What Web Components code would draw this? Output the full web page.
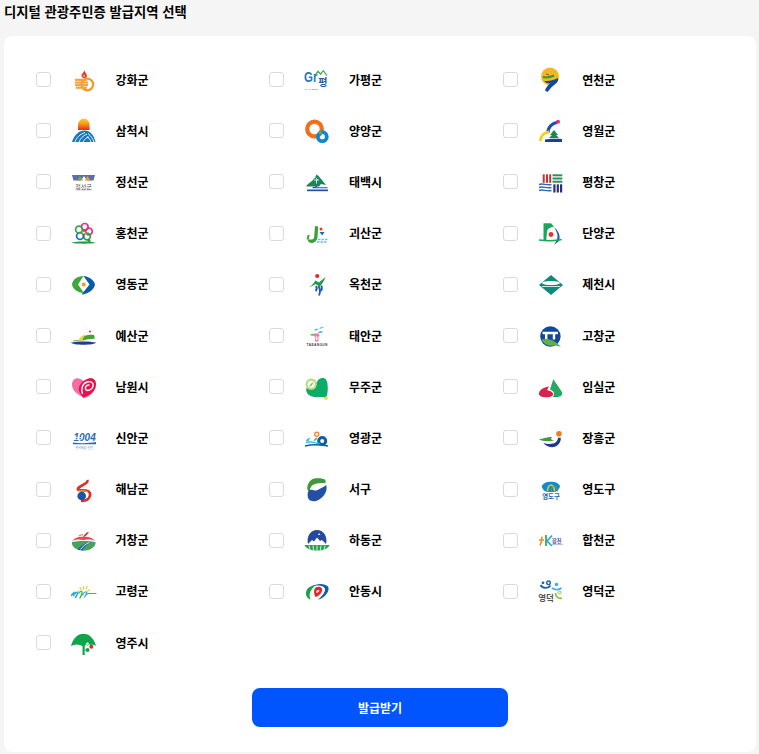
<!DOCTYPE html>
<html lang="ko"><head><meta charset="utf-8"><title>발급지역 선택</title>
<style>html,body{margin:0;padding:0;background:#f5f5f5}body{font-family:"Noto Sans CJK KR","Noto Sans",sans-serif}</style>
</head><body>
<region-page title="디지털 관광주민증 발급지역 선택" action="발급받기"></region-page>
<script>
const K='font-family="Noto Sans CJK KR,sans-serif"';
const LOGOS={
강화군:`<path d="M14.3 4c.6 2.5 3 3.8 2.6 6.5-.3 2-5 2.3-5.4-.3-.3-2 2.500-3.500 2.800-6.200z" fill="#e5382c"/><path d="M14 8.200c.9 1 1.500 1.900.9 2.900h-2.200c-.4-1 .9-1.700 1.300-2.900z" fill="#f6b23c"/><circle cx="17.300" cy="18.500" r="5.800" fill="none" stroke="#f39a2a" stroke-width="2.200"/><g fill="#f4a23e"><rect x="5" y="12.800" width="12" height="2.100"/><rect x="5" y="15.500" width="13" height="2.100"/><rect x="5" y="18.100" width="13" height="2.100"/><rect x="6" y="20.700" width="11" height="2.100"/></g>`,
삼척시:`<defs><linearGradient id="g" x1="0" y1="0" x2="0" y2="1"><stop offset="0" stop-color="#ffd21c"/><stop offset=".5" stop-color="#f7931e"/><stop offset="1" stop-color="#e5261f"/></linearGradient></defs><path d="M8.500 9.500a5.800 6.500 0 0 1 11.600 0v5H8.500z" fill="url(#g)" transform="translate(-.5 -1.500)"/><path d="M2 25C4 18 9 13.500 14.500 13.500 20 13.500 24 18 25.500 25z" fill="#1679bf"/><g fill="none" stroke="#fff" stroke-width=".9"><path d="M5 25c1-4 5-8 10-9.500M9 25c1-3 4-6.500 8-8M13 25c1-2 3-4.500 6-5"/><path d="M24 25c-1-3-3-6-6-8.500M21 25c-.5-2-2-4-4-5.500"/></g>`,
정선군:`<path d="M2 7h23l-1.500 5.500H3.500z" fill="#5c6eb0"/><path d="M10.500 13l3.500-5 3.500 5z" fill="#fff"/><path d="M7 12.500l3-4.500 3 4.500z" fill="#78ac3c"/><path d="M14.500 12.500l3-4.500 3 4.500z" fill="#f0993a"/><rect x="5" y="20.500" width="17" height="2.500" fill="#e6e6e6"/><text x="13.500" y="20.800" font-size="6" text-anchor="middle" fill="#555" ${K}>정선군</text>`,
홍천군:`<g fill="none" stroke-width="1.700"><circle cx="14.800" cy="7.800" r="3.300" stroke="#e8308a"/><circle cx="19" cy="12.500" r="3.300" stroke="#e8308a"/><circle cx="17" cy="17.500" r="3.300" stroke="#2fa84a"/><circle cx="10" cy="17" r="3.400" stroke="#1b6fc0"/><circle cx="9" cy="10.500" r="3.400" stroke="#2fa84a"/></g><rect x="13.200" y="10" width="1.500" height="3" fill="#e5382c"/><circle cx="12.500" cy="14" r=".9" fill="#f39322"/><circle cx="15.500" cy="14.500" r=".9" fill="#f39322"/><path d="M1 23.800C8 22 20 22 26 23.800 20 25 8 25 1 23.800z" fill="#1d9a3c"/><circle cx="19" cy="21.500" r="1.500" fill="#2a9a3c"/>`,
영동군:`<path d="M13.500 6C7 6 2.500 10 2 14.500 3 20 9 23 14 23l-6-8.500z" fill="#3aa83c"/><path d="M13.500 6C19 6.500 24 10 25 14.500 24 20 18 24 11.500 24.500l8-10z" fill="#0b5aa8"/><circle cx="13.700" cy="14.500" r="2" fill="#f39a2a"/>`,
예산군:`<path d="M9 18.500c2-4 8-6.500 15-5.500l1 3.500c-5 .5-9 1-11.500 2z" fill="#3fa535"/><path d="M8 18.500c1.500-3 4-5 8.500-6.500-2 1.500-3.500 4.500-4 6.500z" fill="#f2d32a"/><circle cx="20" cy="9.500" r="1.100" fill="#e5382c"/><path d="M1 20.500c6-1.500 19-1.500 25 0-1 3-24 3-25 0z" fill="#1e3c98"/><path d="M3 19c2-.3 4-.5 5.500-.5" stroke="#3fa535" stroke-width=".8"/>`,
남원시:`<path d="M14.500 25C8 22 2 18 2 11.500 2 7 5.500 4.500 9 5.500 12 6.200 13.500 8 14.500 9.500 16 7 19 4.800 22 5.500 25.500 6.500 26.500 10.500 25.500 14.500 24 20 19.500 23.500 14.500 25z" fill="#f26ea3"/><path d="M13.500 24.700C10 21 7 17 10 12 13 7 19 4.500 22.500 5.500 26.500 7 26.500 12 25 15.500 23 20 18 23 13.500 24.700z" fill="#e2134f"/><path d="M12.500 21C10.500 16 12.500 10.500 17 9 21 7.800 24 10 23 13.500 22 17 17 19 15.500 16.200 14.800 14 17 11.500 19.500 12" fill="none" stroke="#fff" stroke-width="1.400"/>`,
신안군:`<text x="3.500" y="17.500" font-size="10" font-weight="700" font-style="italic" fill="#2a6cb0" font-family="Liberation Sans,sans-serif" transform="translate(0 -3.200) scale(1 1.180)">1004</text><path d="M3 18.500c7 1 16 .8 23-.5v2.200H3z" fill="#2a6cb0"/><path d="M3 13.500h8M3 15.500h8" stroke="#fff" stroke-width=".7"/><text x="14" y="24.700" font-size="3" text-anchor="middle" fill="#5b8fc4" ${K}>천사의섬 신안</text>`,
해남군:`<path d="M17.300 5C19 9 10 10 8 13.500 7 16 12 15 16 15.500 20 16 21 19 19.500 22 18 25 14 26 11 25.700" fill="none" stroke="#d8322a" stroke-width="2.700"/><path d="M8 16c3-1 7-.5 10 1" fill="none" stroke="#f0a030" stroke-width="1"/><circle cx="11.700" cy="21" r="4.300" fill="#1d55a5"/>`,
거창군:`<path d="M2.500 15C5 11 10 10.500 13.500 11 17 10.500 22 11 25 15 20 13 17 13.500 13.500 14 10 13.500 7 13 2.500 15z" fill="#e84a4a"/><path d="M13 11c1-3 4-5 6-5.300-1 2.300-3 4.300-5 5.300z" fill="#d93a36"/><path d="M9 10c1.500-1 3-1.500 4-1" stroke="#e84a4a" stroke-width="1" fill="none"/><path d="M2 16C8 14.500 19 14.500 25.500 16V18C24 22 19 24.700 13.500 24.700S3 22 2 18z" fill="#46a35a"/><path d="M7.500 23.500C10 20 15 17 22 15.800 17 18.500 14 21 12.500 24.500z" fill="#2b62ae"/><path d="M10.500 23.500c2-3 5-5.500 9-7" stroke="#fff" stroke-width=".8" fill="none"/>`,
고령군:`<g fill="none" stroke-linecap="round"><path d="M1.500 18.500c1-2 2-2 2.500-3s-1.500 3 0 3M5 17c.5-1.500 2-2 2.500-1.500s-1 3.500-2 5" stroke="#2fa8dc" stroke-width="1.500"/><path d="M9 16c1-2 2.500-2 3-1s-1 4-2 6" stroke="#4db848" stroke-width="1.500"/><path d="M12.500 18c1-2 3-3.500 4-3s-1 3.500-2 5" stroke="#35aee0" stroke-width="1.300"/><path d="M16.500 17.500l1.500-1h8" stroke="#6a9a70" stroke-width="1.100" stroke-dasharray="1.500 .6"/><path d="M13.500 12l0-2.500M11 12.500l-1-2M16 11.500l1-2M17.500 14l2-1M9.500 14.500l-1.500-.5" stroke="#f5c842" stroke-width="1.300"/></g>`,
영주시:`<path d="M1 17C3 9 8 4.700 13.500 4.700S24 9 26 17C24 15.500 22 15.500 20 16L17 13.500 14.700 17V26H12.500V17C9 15 5 15 1 17z" fill="#0ea54a"/><circle cx="21.300" cy="17.700" r="2" fill="#e62a2a"/><circle cx="17.500" cy="14.800" r="1.600" fill="#fff" stroke="#0ea54a" stroke-width=".5"/><circle cx="17.600" cy="21" r="1.900" fill="#0ea54a"/><path d="M14.500 21h2" stroke="#0ea54a" stroke-width="1"/>`,
가평군:`<path d="M12 9l3-3.800 2.500 3 2.800-3.500 3.700 5" fill="none" stroke="#47a84a" stroke-width="1.200"/><text x="1" y="15" font-size="11.500" font-weight="700" fill="#2a78bd" font-family="Liberation Sans,sans-serif" transform="translate(0 -1.500) scale(1 1.200)">Gr</text><text x="15.200" y="20" font-size="10" font-weight="700" fill="#1f5ea8" ${K}>평</text><text x="2" y="23.700" font-size="2.400" fill="#666" font-family="Liberation Sans,sans-serif">GAPYEONG</text>`,
양양군:`<circle cx="11.500" cy="12" r="7.300" fill="none" stroke="#f0701a" stroke-width="4.200"/><circle cx="19.300" cy="19.700" r="4.500" fill="none" stroke="#0e86d4" stroke-width="3.800"/><path d="M14.500 16.500l3.500-3 1 3.500z" fill="#6eb43a"/>`,
태백시:`<path d="M13.500 6.500C16 8 19 12 23 17L18 16 16 18.500H3C5 15.500 7 14.500 9 13 11 11 12.500 9 13.500 6.500z" fill="#17875a"/><path d="M11 12h5M12.500 9.500l2 2M13.500 12v3.500" stroke="#fff" stroke-width=".9" fill="none"/><path d="M14 18c-.5 .8-2 1.500-4.500 1.800h15" fill="none" stroke="#20509e" stroke-width="1.100"/><rect x="4" y="21.500" width="21" height="1.700" fill="#20509e"/>`,
괴산군:`<path d="M8 20.500c2.500.3 3-1 3.200-3L12 7l3.200.5-.7 11c-.4 3-3 5.500-5.500 5.500-2 0-4-1-4.500-3.500z" fill="#3aa03a"/><path d="M4.500 20.500c.5-1.500 1-3 1-4.500" stroke="#3aa03a" stroke-width="2"/><circle cx="18" cy="10" r="1.500" fill="#e5382c"/><path d="M16.500 13h5l-2.300 3.500z" fill="#1e5fb4"/><path d="M15 20.500h10M14 23h10" stroke="#6cc0ea" stroke-width="1.300" stroke-dasharray="2.500 1"/>`,
옥천군:`<circle cx="14.200" cy="6" r="2.100" fill="#e5282a"/><path d="M4.500 17.500c3-.5 6-3.500 7.800-7L16 12.500l6.500-5.500C21 11 19 14.500 16.500 16.500l-4-2.500C10 16 7.500 17 4.500 17.500z" fill="#1c9a4a"/><path d="M13 16c1.200 1.800 1 3.500-.5 5M15.500 16c1.700 3 2 6 .5 9.500M18.300 15.500c1 2 .8 4 0 5.500" fill="none" stroke="#1f5eb0" stroke-width="1.900"/>`,
태안군:`<path d="M11 11.500h5l.5 2.500-1 .5v5h-3.500v-5l-1.300-.5z" fill="#ef7ab0"/><rect x="12.800" y="14.500" width="1.600" height="3.500" fill="#fff"/><path d="M7 13c1.500-1.500 3.500-1.500 5-.5-1.500 1.500-3.500 1.500-5 .5z" fill="#6cb84a"/><path d="M11 8c1-1 3-1.500 4.500-1-1 1.500-3 2-4.500 1zM16 6.500c1-1 3-2 5-2-1 1.500-3 2.500-5 2zM15 10.500c1-1.500 3-2 5-1-1 1.500-3 2-5 1z" fill="#4fbcdc"/><text x="14" y="23.500" font-size="3.300" fill="#444" text-anchor="middle" font-family="Liberation Sans,sans-serif" font-weight="700" textLength="21">TAEANGUN</text>`,
무주군:`<path d="M14 9C15 6 18 4.700 20 5 24 5.500 24.800 10 24.800 15 24.800 19 24 23 23 25 20 23 14 25.300 9 23.500 4 22 2.500 18 3.500 15L12 12z" fill="#0eaa68"/><circle cx="8.200" cy="11.300" r="5.700" fill="#b7dc7c"/><circle cx="8.200" cy="11.300" r="3.500" fill="#fff"/><path d="M6.200 14c.5-2 2-4 4-5-.3 2-1.500 4-4 5z" fill="#7dbb42"/><circle cx="23" cy="25.300" r="1.800" fill="#e8df45"/>`,
영광군:`<circle cx="19.200" cy="17" r="3.500" fill="none" stroke="#0d5ea8" stroke-width="3"/><path d="M3 18.500c3-1 5-1 8 0s4 1 6 1" fill="none" stroke="#1db4d4" stroke-width="1.300"/><path d="M2 22c6-1.500 15-1.500 23 0" fill="none" stroke="#0d5ea8" stroke-width="1.500"/><circle cx="13.800" cy="10.300" r="2" fill="none" stroke="#f08a3a" stroke-width="1.400"/><path d="M10.500 17c.5-2 1.500-3 3.500-3.500.5 1.500-1 3.500-3.500 3.500z" fill="#5fba48"/><path d="M4 15.500l3-1M3 17l3-1" stroke="#1db4d4" stroke-width="1.100"/>`,
서구:`<path d="M4.200 13.300C4.500 8 8 3.300 13.200 3.300 17 3 21 3.500 22.500 5L22.500 8.300C18 7.500 13 8 9.800 10 7.500 11.500 7 14 6.500 16.700 5 16 4.200 15 4.200 13.300z" fill="#3d9a38"/><path d="M4.800 21.700C4.300 18.500 5 16 6.500 15 9 13.800 12.500 16.500 14.800 15 17.500 13.500 20.500 12 23.200 10 24 13 23.500 16 22.200 18.300 20 22 17 25 13.200 26 10 26.500 7.500 26 6.500 25 5.500 24 5 23 4.800 21.700z" fill="#234fa5"/>`,
하동군:`<path d="M5 18C3 10 8 4 14 4s11 6 9 14z" fill="#254a9c"/><path d="M5 18l4-4 2 1.500 3-4 3 3.500 2-1 4 4z" fill="#fff"/><path d="M16 7l1.500 2-2.500 0z" fill="#fff"/><path d="M1.500 19h25c-1 3.500-6 5.500-12.500 5.500S2.500 22.500 1.500 19z" fill="#25a550"/><path d="M6 19.500l1 4M10 19.500l.6 5M14 19.500v5M18 19.500l-.6 5M22 19.500l-1 4" stroke="#fff" stroke-width=".8"/>`,
안동시:`<clipPath id="c"><rect width="28" height="22.500"/></clipPath><g clip-path="url(#c)"><path d="M13 8C7 8.500 2.500 12 3 17c.3 3 2 5 5 6-3-4-1-11 5-15z" fill="#1aa24a"/><path d="M9 9.500C13 6 22 6 25 9.500 27 13 24 20 14 23.500 22 17 24 12 20 9.500 17 8 12 8 9 9.500z" fill="#0e5ea8"/><path d="M12.500 10.500c4-2 7.500 0 6.500 3.500s-4 5-6.500 6c-2-3-2-7 0-9.500z" fill="#e5242a"/><path d="M13.500 13.500c1-.5 2.500-.5 3 0-.5 1.500-2 2.500-3 2.500z" fill="#fff"/></g>`,
연천군:`<circle cx="13" cy="10.500" r="9" fill="#f3b81e"/><path d="M6 11c4 1 8 0 11-1.500" stroke="#2a9a4a" stroke-width="2" fill="none"/><path d="M9 8l3 1" stroke="#e5382c" stroke-width="1.300"/><path d="M7 15c4 0 10-.5 14-3 1 3.500-2 5.500-5 8-2 1.700-4 4-5.500 6l-2.500-1.500c1-3 3-5.500 5.500-7.500-2 .7-4 .5-6.500-2z" fill="#13489c"/>`,
영월군:`<path d="M11 16c-.5-5 4-10 9-10.500" fill="none" stroke="#1f4fa8" stroke-width="3.200"/><circle cx="21" cy="4.800" r="2" fill="#e8287a"/><path d="M3.500 24c0-5 3.500-8.500 8.500-9" fill="none" stroke="#f5d020" stroke-width="3"/><path d="M17 13l4 5h-8z" fill="#178a52"/><path d="M17 16l5 5h-10z" fill="#178a52"/><path d="M8 22.500c4-1 12-1 17-.5v3H8z" fill="#1f3f90"/>`,
평창군:`<g fill="#c8332f"><rect x="5.700" y="6.300" width="2" height="8.500"/><rect x="9" y="6.300" width="2" height="8.500"/><rect x="12.200" y="6.300" width="2" height="8.500"/></g><g fill="#2f8f5b"><rect x="15.500" y="6.300" width="9.800" height="2"/><rect x="15.500" y="9.500" width="9.800" height="2"/><rect x="15.500" y="12.700" width="9.800" height="2"/></g><path d="M2 16.500c4-1.500 7 1 12.500 0M2 19.500c4-1.500 7 1 12.500 0M2 22.500c4-1.500 7 1 12.500 0" fill="none" stroke="#2c6cb0" stroke-width="1.400"/><g fill="#2e2f7c"><rect x="16.300" y="16.300" width="2.200" height="8.200"/><rect x="19.700" y="16.300" width="2.200" height="8.200"/><rect x="23" y="16.300" width="2.200" height="8.200"/></g>`,
단양군:`<path d="M6.500 4.300h7.500l3 3.200-2 .5c-2 1-4.500 1.500-5 4.500l-.7 8.500H6.500z" fill="#18a85c"/><circle cx="14" cy="15.500" r="2.400" fill="#e5322a"/><path d="M16.500 8C21 11 24 16 22 22l-5 4c2-3 3.500-6 3.500-9 0-3-2-7-4-9z" fill="#1f5eb0"/><path d="M2 21c6 .7 17 .7 22.700-.5" stroke="#18a85c" stroke-width="1.500" fill="none"/>`,
제천시:`<path d="M14 5L26 15 14 25 2 15z" fill="#0e8a7d"/><ellipse cx="14" cy="13" rx="9" ry="2" fill="#fff"/><path d="M5 16.500h18" stroke="#fff" stroke-width=".8"/>`,
고창군:`<circle cx="13.400" cy="14.500" r="10.200" fill="#12489c"/><rect x="5.500" y="9.800" width="15.500" height="2.500" rx=".8" fill="#fff"/><rect x="8" y="11.500" width="2.400" height="6" fill="#fff"/><rect x="15.800" y="11.500" width="2.400" height="6" fill="#fff"/><path d="M4.500 17.500c5-1.500 13-.5 19.500 7.500-3-1-5-1.500-7-1.500-4 1-10-.5-12.500-6z" fill="#5fb04a"/>`,
임실군:`<path d="M16.300 6.300L25 19C26 23 23 24 19 24H15.500C18.500 21 17 18 13 16.500z" fill="#27a860"/><path d="M2 20C3 16 8 14 12 13.500L10 17C12 18 17 18.500 16 22 15 24.500 9 24.500 6 24 3 23.500 1.500 22 2 20z" fill="#d9224e"/>`,
장흥군:`<circle cx="22" cy="9.700" r="2.800" fill="#ef7d22"/><path d="M23.700 13.700C24.500 18 20 23.500 14.700 23.300 11 23 8 21 6.300 18.700 10 20.500 16.500 20.500 19 18 20.500 16.500 21 15 21 13.700z" fill="#1f3990"/><path d="M2 15.300C5.500 15 9 13 15.300 13 13.500 14.500 13.500 16 17.500 16.500 11 17.500 5 17.500 2 15.300z" fill="#3c9a40"/>`,
영도구:`<path d="M4.700 11.500C6 8 10 6.700 14 6.700S22 8 23 11.500C22 14.500 20 16.500 18 17H10C7 16.500 5.500 14 4.700 11.500z" fill="#0f8ad0"/><path d="M10.500 16.500c0-3 1.200-6 3.500-6.500 2.300.5 3.500 3.500 3.500 6.500" fill="none" stroke="#f0c020" stroke-width="1.500"/><path d="M14 16.500c0-3 1.800-5.500 3.500-5.500 2 .5 3 3 3 5.500" fill="none" stroke="#6aa53a" stroke-width="1"/><text x="14" y="23.700" font-size="6.400" font-weight="700" text-anchor="middle" fill="#2a5eb0" ${K}>영도구</text>`,
합천군:`<path d="M2 14h5M5 10.500c0 4-.5 6.500-2 9" stroke="#f08a22" stroke-width="1.500" fill="none"/><path d="M9 9v11" stroke="#2aa84a" stroke-width="1.700"/><path d="M15 9.500l-5 5.500 5 5" stroke="#28a8d8" stroke-width="1.700" fill="none"/><text x="15" y="16.800" font-size="5.200" fill="#4a54a8" font-weight="700" ${K}>합천</text><rect x="15" y="18" width="11" height="1" fill="#b9c3e6"/>`,
영덕군:`<path d="M3.500 8c2 3.500 7.500 4 10 .5" stroke="#1f5fb0" stroke-width="1.900" fill="none"/><circle cx="6" cy="5.800" r="1.400" fill="#1f5fb0"/><circle cx="11.500" cy="5.800" r="1.800" fill="none" stroke="#1f5fb0" stroke-width="1.400"/><path d="M15 11c3 2 7 2 9.500 0" stroke="#3cb0e8" stroke-width="2" fill="none"/><circle cx="19.500" cy="7.500" r="1.800" fill="#3cb0e8"/><text x="9" y="23.800" font-size="8.500" font-weight="700" text-anchor="middle" fill="#555" ${K}>영덕</text><circle cx="22.500" cy="15.500" r="1.500" fill="none" stroke="#8cc63f" stroke-width="1"/><path d="M18.500 16c0 4 3 6 6.500 5" stroke="#8cc63f" stroke-width="1.800" fill="none"/>`
};
const ORDER=["강화군","가평군","연천군","삼척시","양양군","영월군","정선군","태백시","평창군","홍천군","괴산군","단양군","영동군","옥천군","제천시","예산군","태안군","고창군","남원시","무주군","임실군","신안군","영광군","장흥군","해남군","서구","영도구","거창군","하동군","합천군","고령군","안동시","영덕군","영주시"];

class RegionLogo extends HTMLElement{
  connectedCallback(){
    const r=this.attachShadow({mode:'open'});
    r.innerHTML=`<style>:host{display:block;width:28px;height:28px;flex:none}svg{display:block;width:28px;height:28px}</style><svg viewBox="0 0 28 28" aria-hidden="true">${LOGOS[this.getAttribute('region')]||''}</svg>`;
  }
}
class RegionOption extends HTMLElement{
  connectedCallback(){
    const r=this.attachShadow({mode:'open'});
    const n=this.getAttribute('region');
    r.innerHTML=`<style>
      :host{display:flex;align-items:center;height:51.2px}
      label{display:flex;align-items:center;cursor:pointer}
      input{appearance:none;margin:0 19px 0 0;width:15px;height:15px;box-sizing:border-box;border:1.5px solid #dadada;border-radius:3px;background:#fff;flex:none}
      input:checked{background:#0055ff;border-color:#0055ff}
      region-logo{margin-right:17.5px}
      span{font:700 12px/16px "Noto Sans CJK KR",sans-serif;color:#000}
    </style><label><input type="checkbox"><region-logo region="${n}"></region-logo><span>${n}</span></label>`;
  }
}
class RegionCard extends HTMLElement{
  constructor(){super();this.attachShadow({mode:'open'}).innerHTML=`<style>
    :host{display:block;box-sizing:border-box;margin:0 3px 0 4px;height:716px;padding:18px 0 25px 32px;background:#fff;border-radius:8px}
    .g{display:grid;grid-template-columns:repeat(3,233.4px);grid-auto-rows:51.2px}
    .a{display:flex;justify-content:center;margin:19.6px 0 0 -32px}
  </style><div class="g"><slot></slot></div><div class="a"><slot name="action"></slot></div>`}
}
class ActionButton extends HTMLElement{
  constructor(){super();this.attachShadow({mode:'open'}).innerHTML=`<style>
    :host{display:block}
    button{display:block;width:256px;height:39px;border:0;border-radius:8px;background:#0055ff;color:#fff;font:700 12px "Noto Sans CJK KR",sans-serif;padding:0}
  </style><button><slot></slot></button>`}
}
class RegionPage extends HTMLElement{
  connectedCallback(){
    const r=this.attachShadow({mode:'open'});
    r.innerHTML=`<style>
      :host{display:block;width:759px;height:754px;overflow:hidden;background:#f5f5f5}
      h1{margin:0;padding:0 0 0 4px;height:36px;font:700 13.33px/23px "Noto Sans CJK KR",sans-serif;color:#000}
    </style><h1>${this.getAttribute('title')}</h1><region-card>${ORDER.map(n=>`<region-option region="${n}"></region-option>`).join('')}<action-button slot="action">${this.getAttribute('action')}</action-button></region-card>`;
  }
}
customElements.define('region-logo',RegionLogo);
customElements.define('region-option',RegionOption);
customElements.define('region-card',RegionCard);
customElements.define('action-button',ActionButton);
customElements.define('region-page',RegionPage);
</script>
</body></html>
